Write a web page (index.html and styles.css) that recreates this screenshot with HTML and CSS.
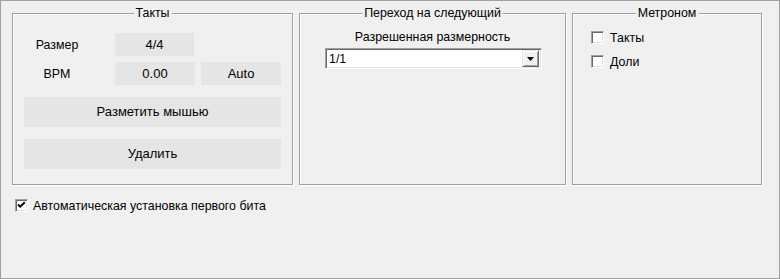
FILE: index.html
```html
<!DOCTYPE html>
<html lang="ru">
<head>
    <meta charset="UTF-8">
    <title>Такты</title>
    <link rel="stylesheet" href="styles.css">
</head>
<body>
    <div class="window">
        <div class="groups">
            <div class="group" id="beats">
                <span class="group-title">Такты</span>
                <div class="row">
                    <span class="label">Размер</span>
                    <span class="field" id="size-field">4/4</span>
                </div>
                <div class="row">
                    <span class="label">BPM</span>
                    <span class="field" id="bpm-field">0.00</span>
                    <span class="field" id="auto-field">Auto</span>
                </div>
                <div class="btn" id="mark-btn">Разметить мышью</div>
                <div class="btn" id="delete-btn">Удалить</div>
            </div>

            <div class="group" id="next">
                <span class="group-title">Переход на следующий</span>
                <div class="caption">Разрешенная размерность</div>
                <div class="select">
                    <span class="select-value">1/1</span>
                    <span class="select-arrow">
                        <svg width="7" height="4" viewBox="0 0 7 4"><path d="M0 0h7L3.5 4z" fill="#000"/></svg>
                    </span>
                </div>
            </div>

            <div class="group" id="metronome">
                <span class="group-title">Метроном</span>
                <div class="check-row">
                    <span class="check"></span>
                    <span>Такты</span>
                </div>
                <div class="check-row">
                    <span class="check"></span>
                    <span>Доли</span>
                </div>
            </div>
        </div>

        <div class="check-row" id="auto-first">
            <span class="check checked">
                <svg width="11" height="11" viewBox="0 0 11 11"><path d="M2 4.5l2.2 2.2L8.8 2.2" fill="none" stroke="#000" stroke-width="1.9"/></svg>
            </span>
            <span>Автоматическая установка первого бита</span>
        </div>
    </div>
</body>
</html>
```

FILE: styles.css
```css
* {
    box-sizing: border-box;
}

body {
    margin: 0;
    background: #f0f0f0;
    font-family: "Liberation Sans", Arial, sans-serif;
    font-size: 12.4px;
    color: #000;
}

.window {
    width: 780px;
    height: 279px;
    border: 1px solid #a0a0a0;
    padding: 12px 0 0 11px;
}

.groups {
    display: flex;
    gap: 6px;
}

.group {
    position: relative;
    height: 172px;
    border: 1px solid #a0a0a0;
    box-shadow: inset 1px 1px 0 #fff, 1px 1px 0 #fff;
}

.group-title {
    position: absolute;
    top: -8px;
    left: 50%;
    transform: translateX(-50%);
    padding: 0 2px;
    background: #f0f0f0;
    line-height: 14px;
    white-space: nowrap;
}

#beats {
    width: 281px;
    padding: 19px 0 0 11px;
}

#next {
    width: 267px;
    padding: 16px 0 0 0;
}

#metronome {
    width: 190px;
    padding: 17px 0 0 18px;
}

.row {
    display: flex;
    align-items: center;
    height: 23px;
    margin-bottom: 6px;
}

.label {
    width: 66px;
    text-align: center;
}

.field {
    height: 23px;
    line-height: 23px;
    background: #e5e5e5;
    text-align: center;
    font-size: 13px;
}

#size-field {
    width: 79px;
    margin-left: 25px;
}

#bpm-field {
    width: 80px;
    margin-left: 25px;
}

#auto-field {
    width: 80px;
    margin-left: 6px;
}

.btn {
    width: 257px;
    height: 30px;
    line-height: 30px;
    margin-top: 12px;
    background: #e5e5e5;
    text-align: center;
    font-size: 13px;
}

.caption {
    text-align: center;
    line-height: 14px;
}

.select {
    display: flex;
    align-items: center;
    justify-content: space-between;
    width: 217px;
    height: 21px;
    margin: 4px 0 0 25px;
    background: #fff;
    border: 1px solid;
    border-color: #a0a0a0 #fff #fff #a0a0a0;
    box-shadow: inset 1px 1px 0 #696969, inset -1px -1px 0 #e3e3e3;
    padding: 0 2px 0 3px;
}

.select-arrow {
    display: flex;
    align-items: center;
    justify-content: center;
    width: 17px;
    height: 17px;
    background: #f0f0f0;
    border: 1px solid;
    border-color: #e3e3e3 #696969 #696969 #e3e3e3;
    box-shadow: inset 1px 1px 0 #fff, inset -1px -1px 0 #a0a0a0;
}

.check-row {
    display: flex;
    align-items: center;
    gap: 6px;
    height: 13px;
    margin-bottom: 11px;
    line-height: 14px;
}

.check {
    display: flex;
    align-items: center;
    justify-content: center;
    width: 13px;
    height: 13px;
    background: #fff;
    border: 1px solid;
    border-color: #a0a0a0 #fff #fff #a0a0a0;
    box-shadow: inset 1px 1px 0 #696969, inset -1px -1px 0 #e3e3e3;
}

#auto-first {
    margin: 14px 0 0 3px;
    gap: 5px;
}
```
